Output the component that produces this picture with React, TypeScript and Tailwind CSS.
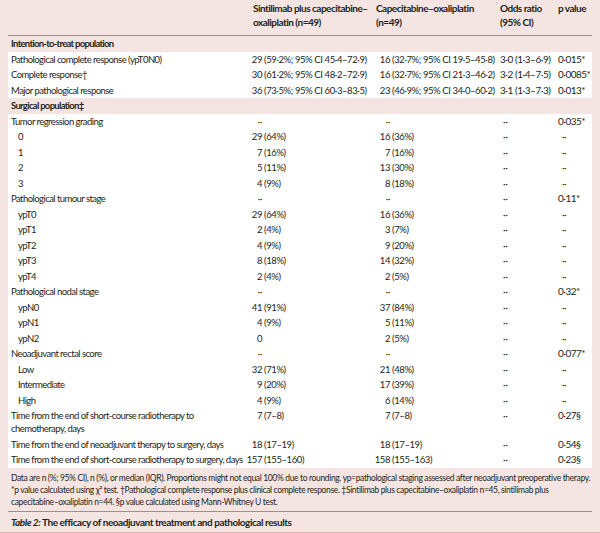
const font = { fontFamily: "Lato, 'Liberation Sans', sans-serif" };

type Row = {
  label: string;
  sub?: boolean;
  c1: string;
  c2: string;
  or: string;
  p: string;
  twoLine?: string;
};

const itt: Row[] = [
  { label: "Pathological complete response (ypT0N0)", c1: "29 (59·2%; 95% CI 45·4–72·9)", c2: "16 (32·7%; 95% CI 19·5–45·8)", or: "3·0 (1·3–6·9)", p: "0·015*" },
  { label: "Complete response†", c1: "30 (61·2%; 95% CI 48·2–72·9)", c2: "16 (32·7%; 95% CI 21·3–46·2)", or: "3·2 (1·4–7·5)", p: "0·0085*" },
  { label: "Major pathological response", c1: "36 (73·5%; 95% CI 60·3–83·5)", c2: "23 (46·9%; 95% CI 34·0–60·2)", or: "3·1 (1·3–7·3)", p: "0·013*" },
];

const D = "··";

const surgical: Row[] = [
  { label: "Tumor regression grading", c1: D, c2: D, or: D, p: "0·035*" },
  { label: "0", sub: true, c1: "29 (64%)", c2: "16 (36%)", or: D, p: D },
  { label: "1", sub: true, c1: "7 (16%)", c2: "7 (16%)", or: D, p: D },
  { label: "2", sub: true, c1: "5 (11%)", c2: "13 (30%)", or: D, p: D },
  { label: "3", sub: true, c1: "4 (9%)", c2: "8 (18%)", or: D, p: D },
  { label: "Pathological tumour stage", c1: D, c2: D, or: D, p: "0·11*" },
  { label: "ypT0", sub: true, c1: "29 (64%)", c2: "16 (36%)", or: D, p: D },
  { label: "ypT1", sub: true, c1: "2 (4%)", c2: "3 (7%)", or: D, p: D },
  { label: "ypT2", sub: true, c1: "4 (9%)", c2: "9 (20%)", or: D, p: D },
  { label: "ypT3", sub: true, c1: "8 (18%)", c2: "14 (32%)", or: D, p: D },
  { label: "ypT4", sub: true, c1: "2 (4%)", c2: "2 (5%)", or: D, p: D },
  { label: "Pathological nodal stage", c1: D, c2: D, or: D, p: "0·32*" },
  { label: "ypN0", sub: true, c1: "41 (91%)", c2: "37 (84%)", or: D, p: D },
  { label: "ypN1", sub: true, c1: "4 (9%)", c2: "5 (11%)", or: D, p: D },
  { label: "ypN2", sub: true, c1: "0", c2: "2 (5%)", or: D, p: D },
  { label: "Neoadjuvant rectal score", c1: D, c2: D, or: D, p: "0·077*" },
  { label: "Low", sub: true, c1: "32 (71%)", c2: "21 (48%)", or: D, p: D },
  { label: "Intermediate", sub: true, c1: "9 (20%)", c2: "17 (39%)", or: D, p: D },
  { label: "High", sub: true, c1: "4 (9%)", c2: "6 (14%)", or: D, p: D },
  { label: "Time from the end of short-course radiotherapy to", twoLine: "chemotherapy, days", c1: "7 (7–8)", c2: "7 (7–8)", or: D, p: "0·27§" },
  { label: "Time from the end of neoadjuvant therapy to surgery, days", c1: "18 (17–19)", c2: "18 (17–19)", or: D, p: "0·54§" },
  { label: "Time from the end of short-course radiotherapy to surgery, days", c1: "157 (155–160)", c2: "158 (155–163)", or: D, p: "0·23§" },
];

// integer part right-aligned so the brackets line up down the column
function Num({ value, w }: { value: string; w: string }) {
  const i = value.indexOf(" ");
  const head = i === -1 ? value : value.slice(0, i);
  const rest = i === -1 ? "" : value.slice(i);
  return (
    <div className="flex whitespace-pre text-[9.5px] tracking-[-0.4px]">
      <span className={`${w} shrink-0 flex justify-end`}>{head}</span>
      <span>{rest}</span>
    </div>
  );
}

function TableRow({ row }: { row: Row }) {
  return (
    <div className="grid grid-cols-[237px_123px_129px_58px_37px] py-[1.25px] leading-[13px] whitespace-nowrap">
      <div className={`${row.sub ? "pl-[10px]" : "pl-[3px]"} text-[9.5px] tracking-[-0.55px]`}>
        {row.label}
        {row.twoLine && (
          <>
            <br />
            {row.twoLine}
          </>
        )}
      </div>
      <Num value={row.c1} w="w-[17px]" />
      <Num value={row.c2} w="w-[22px]" />
      <div className={`${row.or === D ? "pl-[6px]" : "pl-[3px]"} tracking-[-0.45px]`}>{row.or}</div>
      <div className={`${row.p === D ? "pl-[7px]" : "pl-[3px]"} tracking-[-0.5px]`}>{row.p}</div>
    </div>
  );
}

function Section({ title }: { title: string }) {
  return (
    <div className="pl-[3px] py-[1.25px] leading-[13px] font-bold text-[9.5px] tracking-[-0.7px]">{title}</div>
  );
}

export default function App() {
  return (
    <div
      className="w-[600px] h-[533px] bg-[#f4e5e2] text-[#231f20] text-[10px] px-[8px] border-b border-[#dcb3ae] overflow-hidden"
      style={font}
    >
      <div className="grid grid-cols-[237px_123px_129px_58px_37px] pt-[1px] pb-[6px] leading-[14px] font-bold tracking-[-0.5px] whitespace-nowrap border-b border-[#9d908d]">
        <div />
        <div className="pl-[8px]">
          Sintilimab plus capecitabine–
          <br />
          oxaliplatin (n=49)
        </div>
        <div className="pl-[8px]">
          Capecitabine–oxaliplatin
          <br />
          (n=49)
        </div>
        <div className="pl-[3px]">
          Odds ratio
          <br />
          (95% CI)
        </div>
        <div className="pl-[3px]">p value</div>
      </div>

      <Section title="Intention-to-treat population" />
      <div className="bg-white">
        {itt.map((r) => (
          <TableRow key={r.label} row={r} />
        ))}
      </div>

      <Section title="Surgical population‡" />
      <div className="bg-white">
        {surgical.map((r) => (
          <TableRow key={r.label} row={r} />
        ))}
      </div>

      <div className="pl-[3px] pt-[4px] pb-[3px] text-[8.5px] leading-[12px] tracking-[-0.35px] whitespace-nowrap border-b border-[#9d908d]">
        <div>
          Data are n (%; 95% CI), n (%), or median (IQR). Proportions might not equal 100% due to rounding. yp=pathological staging assessed after neoadjuvant preoperative therapy.
        </div>
        <div>
          *p value calculated using χ² test. †Pathological complete response plus clinical complete response. ‡Sintilimab plus capecitabine–oxaliplatin n=45, sintilimab plus
        </div>
        <div>capecitabine–oxaliplatin n=44. §p value calculated using Mann-Whitney U test.</div>
      </div>

      <div className="pl-[3px] pt-[3px] leading-[14px] font-bold tracking-[-0.45px]">
        <span className="italic">Table 2:</span> The efficacy of neoadjuvant treatment and pathological results
      </div>
    </div>
  );
}
